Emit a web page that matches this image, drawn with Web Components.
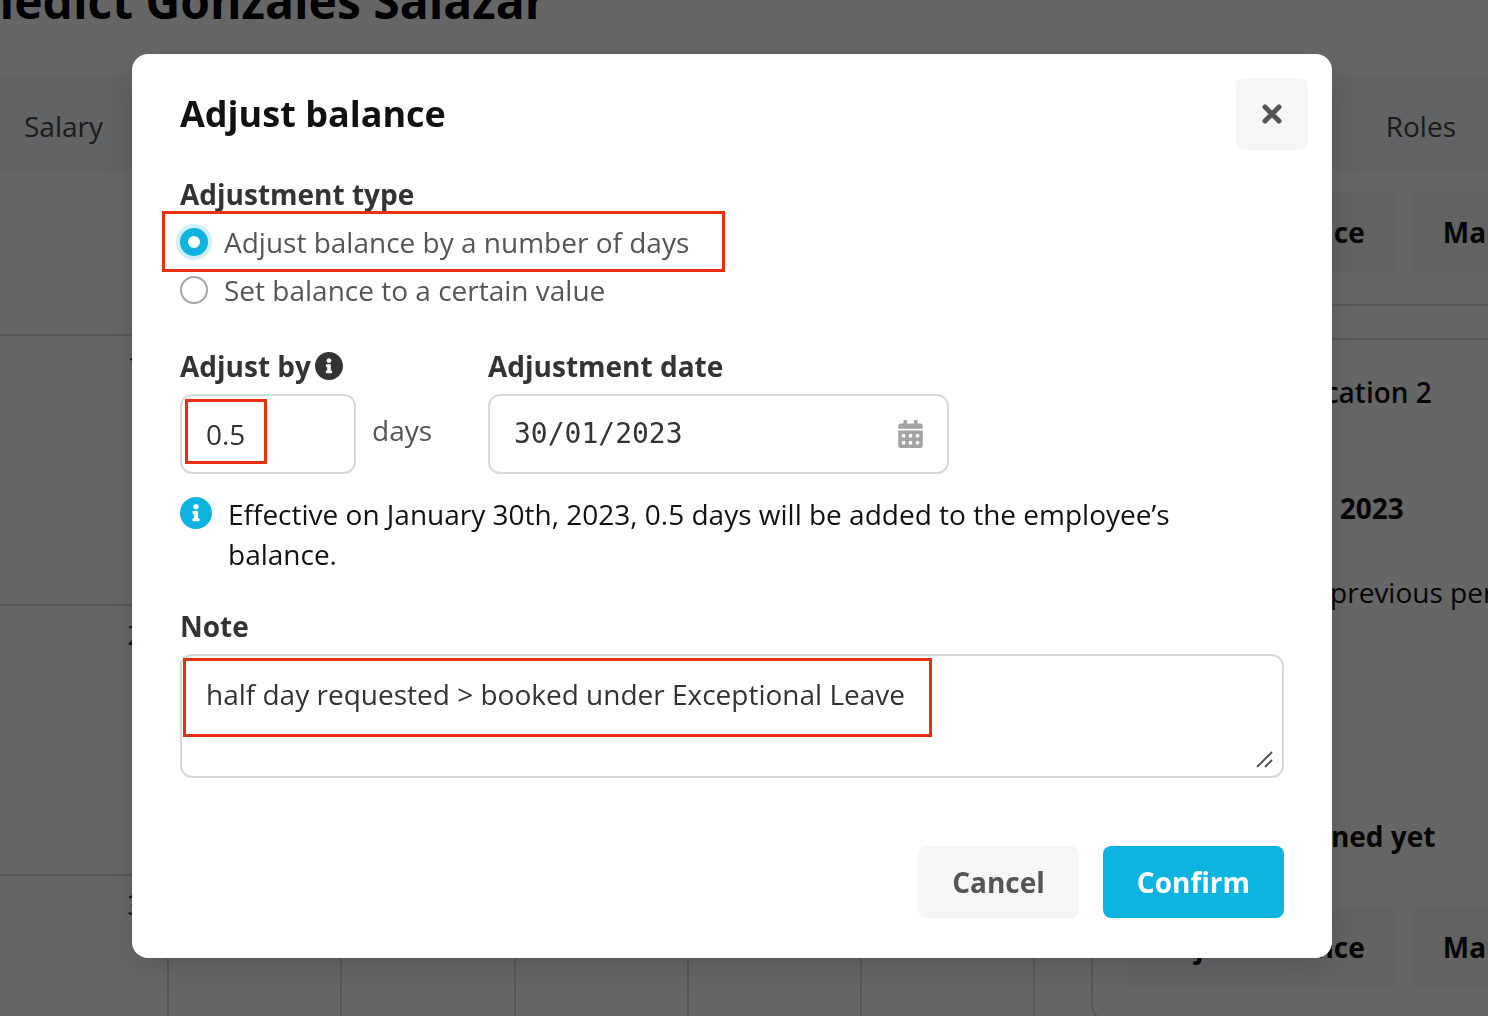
<!DOCTYPE html>
<html lang="en">
<head>
<meta charset="utf-8">
<meta name="viewport" content="width=device-width, initial-scale=1">
<title>Adjust balance</title>
<style>
  html, body {
    height: 100%;
  }
  body {
    margin: 0;
    overflow: hidden;
    background: #fff;
    color: #333;
    font-family: "Open Sans", "Noto Sans", sans-serif;
    font-size: 28px;
    line-height: 40px;
  }
</style>
</head>
<body>
<employee-page></employee-page>
<modal-dialog heading="Adjust balance">
  <balance-form></balance-form>
  <ui-button slot="actions">Cancel</ui-button>
  <ui-button slot="actions" variant="primary">Confirm</ui-button>
</modal-dialog>

<script>
  const INFO_PATH = "M256 8C119.043 8 8 119.083 8 256c0 136.997 111.043 248 248 248s248-111.003 248-248C504 119.083 392.957 8 256 8zm0 110c23.196 0 42 18.804 42 42s-18.804 42-42 42-42-18.804-42-42 18.804-42 42-42zm56 254c0 6.627-5.373 12-12 12h-88c-6.627 0-12-5.373-12-12v-24c0-6.627 5.373-12 12-12h12v-64h-12c-6.627 0-12-5.373-12-12v-24c0-6.627 5.373-12 12-12h64c6.627 0 12 5.373 12 12v100h12c6.627 0 12 5.373 12 12v24z";

  function render(el, html) {
    const template = document.createElement("template");
    template.innerHTML = html;
    el.attachShadow({ mode: "open" }).appendChild(template.content.cloneNode(true));
  }

  class InfoIcon extends HTMLElement {
    constructor() {
      super();
      render(this, `
        <style>
        :host { display: block; width: 28px; height: 28px; flex: none; }
        svg { display: block; width: 100%; height: 100%; }
        </style>
        <svg viewBox="8 8 496 496" aria-hidden="true"><path fill="currentColor" d="${INFO_PATH}"/></svg>
      `);
    }
  }

  class UiButton extends HTMLElement {
    constructor() {
      super();
      render(this, `
        <style>
        :host { display: block; }
        button {
          display: flex;
          align-items: center;
          justify-content: center;
          min-height: 72px;
          padding: 0 34px;
          border: none;
          border-radius: 8px;
          background: #f5f6f8;
          color: #555;
          font: inherit;
          font-weight: 700;
          white-space: nowrap;
          cursor: pointer;
        }
        :host([variant="primary"]) button { background: #0db4e0; color: #fff; }
        :host([variant="page"]) button { min-height: 80px; padding: 0 31px; color: #111; }
        </style>
        <button type="button"><slot></slot></button>
      `);
    }
  }

  // red frame drawn over the content it is placed in
  class MarkFrame extends HTMLElement {
    constructor() {
      super();
      render(this, `
        <style>
        :host {
          position: absolute;
          box-sizing: border-box;
          border: 3px solid #e8300f;
          pointer-events: none;
        }
        </style>
      `);
    }
  }

  class RadioOption extends HTMLElement {
    constructor() {
      super();
      render(this, `
        <style>
        :host { display: block; position: relative; color: #555; }
        label { display: flex; align-items: center; gap: 16px; min-height: 48px; }
        input {
          appearance: none;
          flex: none;
          width: 28px;
          height: 28px;
          margin: 0;
          border: 2px solid #a6a6a6;
          border-radius: 50%;
          background: #fff;
        }
        input:checked {
          border: 8px solid #0db4e0;
          box-shadow: 0 0 0 4px #cff0f9;
        }
        mark-frame { left: -18px; top: -7px; width: 563px; height: 61px; }
        </style>
        <label><input type="radio"><span><slot></slot></span></label>
        ${this.hasAttribute("marked") ? "<mark-frame></mark-frame>" : ""}
      `);
      const input = this.shadowRoot.querySelector("input");
      input.checked = this.hasAttribute("checked");
      // each input sits in its own shadow root, so the group is kept in step here
      input.addEventListener("change", () => {
        this.parentElement.querySelectorAll("radio-option").forEach((el) => {
          if (el !== this) {
            el.shadowRoot.querySelector("input").checked = false;
          }
        });
      });
    }
  }

  class BalanceForm extends HTMLElement {
    constructor() {
      super();
      render(this, `
        <style>
        :host { display: block; }
        form { display: flex; flex-direction: column; }
        fieldset { margin: 0; padding: 0; border: none; min-width: 0; }
        legend, label { padding: 0; font-weight: 700; color: #333; }
        legend { margin-bottom: 4px; }
        .fields {
          display: grid;
          grid-template-columns: minmax(0, 284fr) minmax(0, 461fr) minmax(0, 311fr);
          gap: 24px;
          margin-top: 32px;
        }
        .label { display: flex; align-items: center; gap: 4px; margin-bottom: 8px; }
        .amount { display: flex; align-items: center; gap: 16px; color: #555; }
        .box {
          position: relative;
          display: flex;
          align-items: center;
          box-sizing: border-box;
          min-height: 80px;
          border: 2px solid #d5dadf;
          border-radius: 12px;
          background: #fff;
        }
        .amount .box { width: 62%; }
        .amount span { padding-bottom: 8px; }
        input, textarea {
          box-sizing: border-box;
          flex: 1;
          min-width: 0;
          margin: 0;
          padding: 0 24px;
          border: none;
          outline: none;
          background: none;
          color: #333;
          font: inherit;
        }
        input { height: 40px; }
        .date input { font-family: "DejaVu Sans Mono", "Liberation Mono", monospace; }
        .date button {
          display: flex;
          margin: 0 24px;
          padding: 0;
          border: none;
          background: none;
          color: #a3a3a3;
        }
        .amount mark-frame { left: 3px; top: 3px; width: 82px; height: 65px; }
        .info { display: flex; gap: 16px; margin: 20px 0 32px; color: #111; }
        .info info-icon { width: 32px; height: 32px; margin-top: 3px; color: #0db4e0; }
        .info p { margin: 0; }
        textarea { display: block; height: 120px; padding: 18px 24px; resize: none; }
        .note mark-frame { left: 1px; top: 2px; width: 749px; height: 79px; }
        .grip { position: absolute; right: 9px; bottom: 8px; }
        </style>
        <form>
          <fieldset>
            <legend>Adjustment type</legend>
            <radio-option checked marked>Adjust balance by a number of days</radio-option>
            <radio-option>Set balance to a certain value</radio-option>
          </fieldset>
          <div class="fields">
            <div>
              <div class="label"><label for="amount">Adjust by</label><info-icon></info-icon></div>
              <div class="amount">
                <div class="box"><input id="amount" type="text" value="0.5"><mark-frame></mark-frame></div>
                <span>days</span>
              </div>
            </div>
            <div>
              <div class="label"><label for="date">Adjustment date</label></div>
              <div class="box date">
                <input id="date" type="text" value="30/01/2023">
                <button type="button" aria-label="Open calendar">
                  <svg width="25" height="28" viewBox="0 0 448 512"><path fill="currentColor" d="M0 464c0 26.500 21.500 48 48 48h352c26.500 0 48-21.500 48-48V192H0v272zm320-196c0-6.600 5.400-12 12-12h40c6.600 0 12 5.400 12 12v40c0 6.600-5.400 12-12 12h-40c-6.600 0-12-5.400-12-12v-40zm0 128c0-6.600 5.400-12 12-12h40c6.600 0 12 5.400 12 12v40c0 6.600-5.400 12-12 12h-40c-6.600 0-12-5.400-12-12v-40zM192 268c0-6.600 5.400-12 12-12h40c6.600 0 12 5.400 12 12v40c0 6.600-5.400 12-12 12h-40c-6.600 0-12-5.400-12-12v-40zm0 128c0-6.600 5.400-12 12-12h40c6.600 0 12 5.400 12 12v40c0 6.600-5.400 12-12 12h-40c-6.600 0-12-5.400-12-12v-40zM64 268c0-6.600 5.400-12 12-12h40c6.600 0 12 5.400 12 12v40c0 6.600-5.400 12-12 12H76c-6.600 0-12-5.400-12-12v-40zm0 128c0-6.600 5.400-12 12-12h40c6.600 0 12 5.400 12 12v40c0 6.600-5.400 12-12 12H76c-6.600 0-12-5.400-12-12v-40zM400 64h-48V16c0-8.800-7.200-16-16-16h-32c-8.800 0-16 7.200-16 16v48H160V16c0-8.800-7.200-16-16-16h-32c-8.800 0-16 7.200-16 16v48H48C21.500 64 0 85.500 0 112v48h448v-48c0-26.500-21.500-48-48-48z"/></svg>
                </button>
              </div>
            </div>
          </div>
          <div class="info">
            <info-icon></info-icon>
            <p>Effective on January 30th, 2023, 0.5 days will be added to the employee’s balance.</p>
          </div>
          <div class="label"><label for="note">Note</label></div>
          <div class="box note">
            <textarea id="note">half day requested &gt; booked under Exceptional Leave</textarea>
            <svg class="grip" width="17" height="17" viewBox="0 0 17 17" aria-hidden="true"><path d="M1 16L16 1M9 16l7-7" stroke="#555" stroke-width="2" fill="none"/></svg>
            <mark-frame></mark-frame>
          </div>
        </form>
      `);
    }
  }

  class ModalDialog extends HTMLElement {
    constructor() {
      super();
      render(this, `
        <style>
        :host {
          position: fixed;
          inset: 0;
          box-sizing: border-box;
          padding: 54px 156px 54px 132px;
          overflow: auto;
          background: rgba(0, 0, 0, 0.6);
        }
        section {
          border-radius: 16px;
          background: #fff;
          box-shadow: 0 8px 32px rgba(0, 0, 0, 0.15);
        }
        header {
          display: flex;
          align-items: center;
          justify-content: space-between;
          padding: 24px 24px 0 48px;
        }
        h2 { margin: 0; font-size: 36px; line-height: 48px; color: #111; }
        .close {
          display: flex;
          align-items: center;
          justify-content: center;
          width: 72px;
          height: 72px;
          border: none;
          border-radius: 8px;
          background: #f5f6f8;
          color: #555;
          cursor: pointer;
        }
        .body { padding: 24px 48px 0; }
        footer {
          display: flex;
          justify-content: flex-end;
          gap: 24px;
          padding: 68px 48px 40px;
        }
        </style>
        <section role="dialog" aria-modal="true" aria-labelledby="title">
          <header>
            <h2 id="title">${this.getAttribute("heading")}</h2>
            <button class="close" type="button" aria-label="Close">
              <svg width="20" height="20" viewBox="0 0 20 20"><path d="M3 3L17 17M17 3L3 17" stroke="currentColor" stroke-width="5" stroke-linecap="round"/></svg>
            </button>
          </header>
          <div class="body"><slot></slot></div>
          <footer><slot name="actions"></slot></footer>
        </section>
      `);
    }
  }

  class MonthCalendar extends HTMLElement {
    constructor() {
      super();
      let cells = "";
      for (let row = 0; row < 4; row++) {
        for (let col = 0; col < 6; col++) {
          // only the first column is in view next to the dialog
          const day = row > 0 && col === 0 ? row : "";
          cells += `<div>${day}</div>`;
        }
      }
      render(this, `
        <style>
        :host {
          display: grid;
          grid-template-columns: repeat(6, 1fr);
          grid-template-rows: 163px repeat(3, 270px);
          margin-left: -6px;
          border-right: 2px solid #d5dadf;
        }
        div {
          box-sizing: border-box;
          padding: 8px 24px;
          border-bottom: 2px solid #d5dadf;
          text-align: right;
        }
        div:nth-child(n + 20) { border-left: 2px solid #d5dadf; }
        </style>
        ${cells}
      `);
    }
  }

  class BalanceCard extends HTMLElement {
    constructor() {
      super();
      render(this, `
        <style>
        :host {
          display: block;
          min-width: 560px;
          box-sizing: border-box;
          padding: 32px 34px;
          border: 2px solid #d5dadf;
          border-radius: 16px;
          color: #111;
        }
        :host([cut]) { padding-top: 19px; border-top: none; border-radius: 0 0 16px 16px; }
        .buttons { display: flex; gap: 16px; }
        </style>
        <slot></slot>
        <div class="buttons">
          <ui-button variant="page">Adjust balance</ui-button>
          <ui-button variant="page">Manage</ui-button>
        </div>
      `);
    }
  }

  class EmployeePage extends HTMLElement {
    constructor() {
      super();
      render(this, `
        <style>
        :host { display: block; height: 100%; overflow: hidden; }
        h1 {
          margin: -31px 0 42px -78px;
          color: #000;
          font-size: 48px;
          line-height: 64px;
          white-space: nowrap;
        }
        nav {
          display: flex;
          justify-content: space-between;
          padding: 31px 32px 27px 24px;
          background: #f5f7fa;
        }
        nav a { color: #444; text-decoration: none; }
        main { display: grid; grid-template-columns: 1035fr 397fr; gap: 56px; }
        aside { display: flex; flex-direction: column; gap: 32px; min-width: 0; }
        p { margin: 0; white-space: nowrap; }
        .name { padding: 0 0 76px 164px; font-weight: 600; }
        .month { padding: 0 0 44px 97px; font-weight: 700; }
        .hint { padding: 0 0 204px 77px; }
        .planned { padding: 0 0 51px 60px; font-weight: 700; }
        </style>
        <h1>Benedict Gonzales Salazar</h1>
        <nav><a href="#salary">Salary</a><a href="#roles">Roles</a></nav>
        <main>
          <month-calendar></month-calendar>
          <aside>
            <balance-card cut></balance-card>
            <balance-card>
              <p class="name">Vacation 2</p>
              <p class="month">January 2023</p>
              <p class="hint">From the previous period</p>
              <p class="planned">None planned yet</p>
            </balance-card>
          </aside>
        </main>
      `);
    }
  }

  customElements.define("info-icon", InfoIcon);
  customElements.define("ui-button", UiButton);
  customElements.define("mark-frame", MarkFrame);
  customElements.define("radio-option", RadioOption);
  customElements.define("balance-form", BalanceForm);
  customElements.define("modal-dialog", ModalDialog);
  customElements.define("month-calendar", MonthCalendar);
  customElements.define("balance-card", BalanceCard);
  customElements.define("employee-page", EmployeePage);
</script>
</body>
</html>
